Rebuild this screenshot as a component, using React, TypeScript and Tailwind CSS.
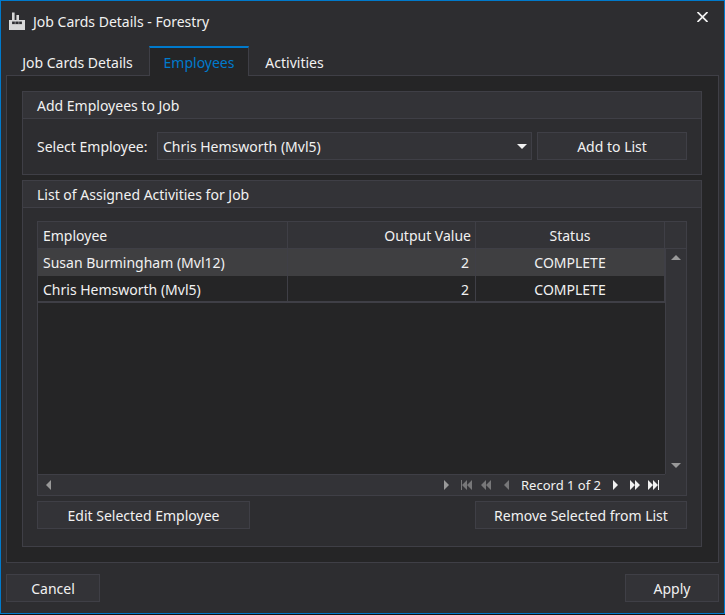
import type { ReactNode } from "react";

const BUTTON =
  "h-7 border border-[#3f3f46] bg-[#333337] pt-px text-center hover:bg-[#3f3f46]";

const EMPLOYEES = [
  { name: "Susan Burmingham (Mvl12)", output: 2, status: "COMPLETE" },
  { name: "Chris Hemsworth (Mvl5)", output: 2, status: "COMPLETE" },
];

function FactoryIcon() {
  return (
    <svg width="16" height="18" viewBox="0 0 16 18" aria-hidden="true">
      <path fill="#d8d8d8" d="M0 8H3V0.5H5.6V8H7.4V3H10V8H16V18H0z" />
      <path fill="#77777a" d="M3 9.5H13V12.2H3z" />
      <path fill="#2d2d30" d="M3.2 9.7H5.6V12H3.2zM6.8 9.7H9.2V12H6.8zM10.4 9.7H12.8V12H10.4z" />
    </svg>
  );
}

function Glyph({ d, width, height = 10, bar }: { d: string; width: number; height?: number; bar?: number }) {
  return (
    <svg width={width} height={height} viewBox={`0 0 ${width} ${height}`} fill="currentColor" aria-hidden="true">
      <path d={d} />
      {bar !== undefined && <rect x={bar} y="0" width="1" height={height} />}
    </svg>
  );
}

function IconButton({ label, className, children }: { label: string; className: string; children: ReactNode }) {
  return (
    <button type="button" aria-label={label} className={`flex items-center justify-center ${className}`}>
      {children}
    </button>
  );
}

function Group({ title, className, children }: { title: string; className: string; children: ReactNode }) {
  return (
    <section className={`flex flex-col border border-[#3f3f46] bg-[#2d2d30] ${className}`}>
      <h2 className="h-[27px] border-b border-[#3f3f46] bg-[#333337] pl-[14px] leading-7">{title}</h2>
      {children}
    </section>
  );
}

function EmployeeGrid() {
  return (
    <div className="grid flex-1 grid-cols-[1fr_21px] grid-rows-[1fr_21px] border border-[#3f3f46] bg-[#333337]">
      <div className="bg-[#252526]">
        <table className="w-full table-fixed border-separate border-spacing-0">
          <colgroup>
            <col />
            <col className="w-[188px]" />
            <col className="w-[189px]" />
          </colgroup>
          <thead>
            <tr className="h-[27px] bg-[#333337]">
              <th className="border-r border-b border-[#3f3f46] px-[5px] pt-[2px] text-left font-normal">Employee</th>
              <th className="border-r border-b border-[#3f3f46] px-[4px] pt-[2px] text-right font-normal">
                Output Value
              </th>
              <th className="border-r border-b border-[#3f3f46] pt-[2px] text-center font-normal">Status</th>
            </tr>
          </thead>
          <tbody>
            {EMPLOYEES.map((e, i) => (
              <tr key={e.name} className={i === 0 ? "h-[27px] bg-[#3f3f41]" : "h-[27px]"}>
                <td className={`border-r border-[#3f3f46] px-[5px] ${i === 0 ? "" : "border-b-2 pt-[2px]"}`}>
                  {e.name}
                </td>
                <td
                  className={`border-r border-[#3f3f46] px-[6px] text-right ${i === 0 ? "" : "border-b-2 pt-[2px]"}`}
                >
                  {e.output}
                </td>
                <td className={`border-r border-[#3f3f46] text-center ${i === 0 ? "" : "border-b-2 pt-[2px]"}`}>
                  {e.status}
                </td>
              </tr>
            ))}
          </tbody>
        </table>
      </div>
      <div className="flex flex-col text-[#999999]">
        <div className="h-[27px] border-b border-[#3f3f46]" />
        <div className="flex flex-1 flex-col justify-between border-l border-[#3f3f46]">
          <IconButton label="Scroll up" className="h-[17px] w-full">
            <Glyph width={10} height={5} d="M5 0L10 5H0z" />
          </IconButton>
          <IconButton label="Scroll down" className="h-[17px] w-full">
            <Glyph width={10} height={5} d="M0 0H10L5 5z" />
          </IconButton>
        </div>
      </div>
      <div className="flex border-t border-[#3f3f46] pr-[2px]">
        <IconButton label="Scroll left" className="w-5 text-[#999999]">
          <Glyph width={5} d="M5 0V10L0 5z" />
        </IconButton>
        <div className="flex-1" />
        <IconButton label="Scroll right" className="w-5 text-[#999999]">
          <Glyph width={5} d="M0 0L5 5L0 10z" />
        </IconButton>
        <IconButton label="First record" className="w-5 text-[#777779]">
          <Glyph width={11} bar={0} d="M6 0V10L1 5zM11 0V10L6 5z" />
        </IconButton>
        <IconButton label="Previous page" className="w-5 text-[#777779]">
          <Glyph width={10} d="M5 0V10L0 5zM10 0V10L5 5z" />
        </IconButton>
        <IconButton label="Previous record" className="w-5 text-[#777779]">
          <Glyph width={5} d="M5 0V10L0 5z" />
        </IconButton>
        <span className="w-[90px] text-center text-[13px] leading-5 whitespace-nowrap">Record 1 of 2</span>
        <IconButton label="Next record" className="w-[19px]">
          <Glyph width={5} d="M0 0L5 5L0 10z" />
        </IconButton>
        <IconButton label="Next page" className="w-[19px]">
          <Glyph width={10} d="M0 0L5 5L0 10zM5 0L10 5L5 10z" />
        </IconButton>
        <IconButton label="Last record" className="w-[19px]">
          <Glyph width={11} bar={10} d="M0 0L5 5L0 10zM5 0L10 5L5 10z" />
        </IconButton>
      </div>
      <div />
    </div>
  );
}

export default function App() {
  return (
    <div className="flex min-h-screen bg-[#111111] pb-px font-['Noto_Sans','Open_Sans',sans-serif] text-[14px] leading-5 text-[#f1f1f1]">
      <div className="flex flex-1 flex-col border border-[#007acc] bg-[#2d2d30]">
        <header className="flex h-[45px] items-start pl-2">
          <div className="flex h-10 flex-1 items-center gap-2">
            <FactoryIcon />
            <h1 className="pt-[2px]">Job Cards Details - Forestry</h1>
          </div>
          <IconButton label="Close" className="h-8 w-[44px]">
            <svg width="11" height="10" viewBox="0 0 11 10" stroke="currentColor" strokeWidth="1.7" aria-hidden="true">
              <path d="M0.5 0L10.5 10M10.5 0L0.5 10" />
            </svg>
          </IconButton>
        </header>

        <main className="flex flex-1 flex-col px-[5px]">
          <div role="tablist" className="z-10 -mb-px flex h-[30px]">
            <button type="button" role="tab" aria-selected="false" className="w-[143px] pt-1">
              Job Cards Details
            </button>
            <button
              type="button"
              role="tab"
              aria-selected="true"
              className="w-[100px] border-x border-t-2 border-x-[#3f3f46] border-t-[#007acc] bg-[#252526] pt-[2px] text-[#007acc]"
            >
              Employees
            </button>
            <button type="button" role="tab" aria-selected="false" className="w-[91px] pt-1">
              Activities
            </button>
          </div>

          <div
            role="tabpanel"
            className="flex flex-1 flex-col gap-[5px] border border-[#3f3f46] bg-[#252526] py-[15px] pr-4 pl-[15px]"
          >
            <Group title="Add Employees to Job" className="">
              <div className="flex h-[55px] items-center px-[14px] pb-px">
                <label htmlFor="employee" className="w-[120px] pt-[2px] whitespace-nowrap">
                  Select Employee:
                </label>
                <div className="relative flex-1">
                  <select
                    id="employee"
                    className="block h-7 w-full appearance-none border border-[#3f3f46] bg-[#333337] pt-[2px] pl-[5px]"
                  >
                    <option>Chris Hemsworth (Mvl5)</option>
                    <option>Susan Burmingham (Mvl12)</option>
                  </select>
                  <span className="pointer-events-none absolute inset-y-0 right-[5px] flex items-center">
                    <Glyph width={10} height={5} d="M0 0H10L5 5z" />
                  </span>
                </div>
                <button type="button" className={`${BUTTON} ml-[5px] w-[150px]`}>
                  Add to List
                </button>
              </div>
            </Group>

            <Group title="List of Assigned Activities for Job" className="flex-1">
              <div className="flex flex-1 flex-col gap-[5px] px-[14px] pt-[13px] pb-[17px]">
                <EmployeeGrid />
                <div className="flex justify-between">
                  <button type="button" className={`${BUTTON} w-[213px]`}>
                    Edit Selected Employee
                  </button>
                  <button type="button" className={`${BUTTON} w-[212px]`}>
                    Remove Selected from List
                  </button>
                </div>
              </div>
            </Group>
          </div>
        </main>

        <footer className="flex justify-between px-[5px] py-[11px]">
          <button type="button" className={`${BUTTON} w-[94px]`}>
            Cancel
          </button>
          <button type="button" className={`${BUTTON} w-[94px]`}>
            Apply
          </button>
        </footer>
      </div>
    </div>
  );
}
